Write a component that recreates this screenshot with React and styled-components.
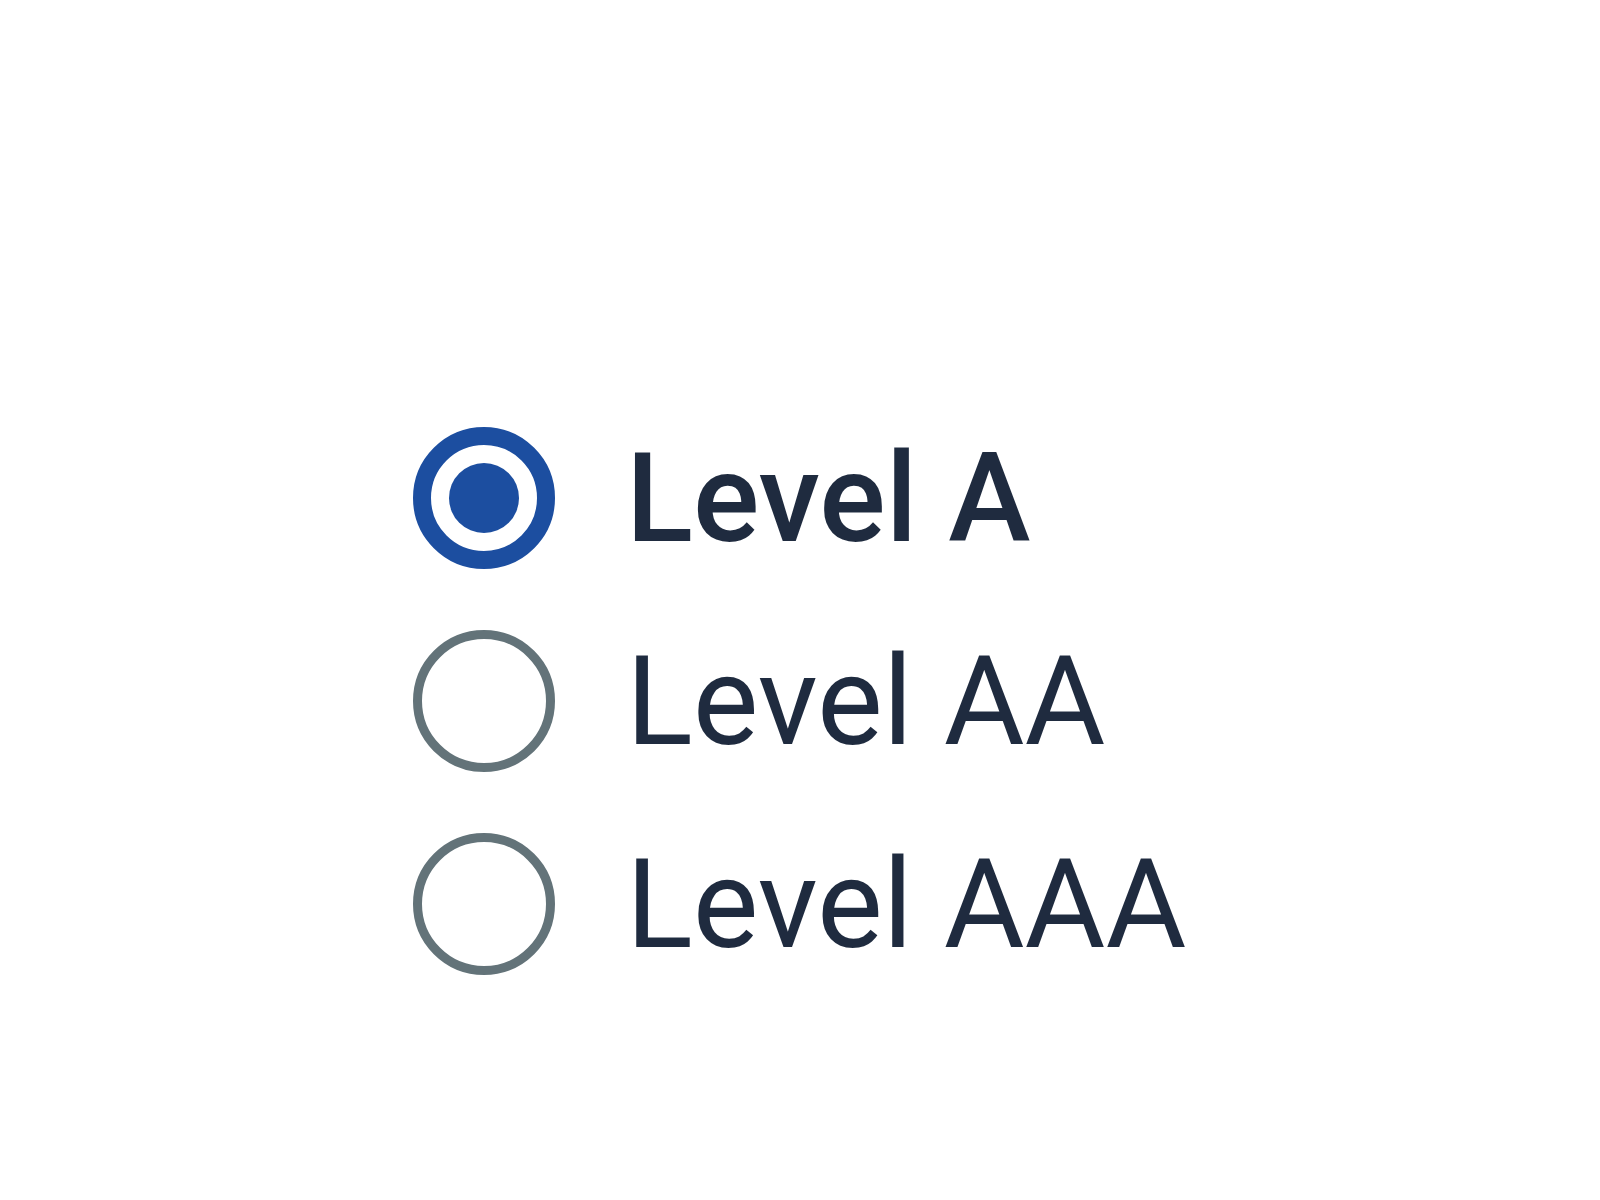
import React, { useState } from "react";
import styled, { createGlobalStyle } from "styled-components";

const GlobalStyle = createGlobalStyle`
  html, body {
    margin: 0;
    padding: 0;
    background: #ffffff;
  }
  body {
    font-family: Roboto, "Open Sans", sans-serif;
  }
`;

const levels = ["Level A", "Level AA", "Level AAA"];

const App = () => {
  const [selected, setSelected] = useState("Level A");

  return (
    <>
      <GlobalStyle />
      <Page>
        <Group role="radiogroup">
          {levels.map((level) => (
            <Option key={level}>
              <HiddenInput
                type="radio"
                name="level"
                value={level}
                checked={selected === level}
                onChange={() => setSelected(level)}
              />
              <Circle $checked={selected === level}>
                {selected === level && <Dot />}
              </Circle>
              <Label $checked={selected === level}>{level}</Label>
            </Option>
          ))}
        </Group>
      </Page>
    </>
  );
};

const Page = styled.div`
  width: 1600px;
  height: 1200px;
  box-sizing: border-box;
  padding: 427px 0 0 413px;
`;

const Group = styled.div`
  display: flex;
  flex-direction: column;
  gap: 61px;
`;

const Option = styled.label`
  display: flex;
  align-items: center;
  gap: 71px;
  cursor: pointer;
`;

const HiddenInput = styled.input`
  position: absolute;
  opacity: 0;
  width: 0;
  height: 0;
  margin: 0;
`;

const Circle = styled.span`
  flex: none;
  box-sizing: border-box;
  width: 142px;
  height: 142px;
  border-radius: 50%;
  border: ${(p) => (p.$checked ? "18px solid #1c4ea0" : "9px solid #637379")};
  display: flex;
  align-items: center;
  justify-content: center;
`;

const Dot = styled.span`
  width: 70px;
  height: 70px;
  border-radius: 50%;
  background: #1c4ea0;
`;

const Label = styled.span`
  font-size: 124px;
  line-height: 1;
  margin-top: 1px;
  color: #1f2b3f;
  font-weight: ${(p) => (p.$checked ? 500 : 400)};
`;

export default App;
